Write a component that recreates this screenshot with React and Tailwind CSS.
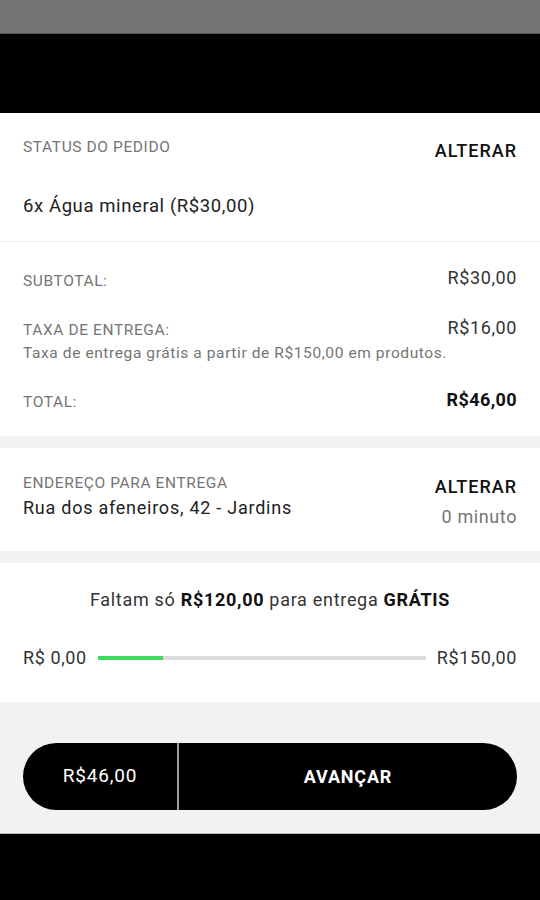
export default function App() {
  const font = { fontFamily: "Roboto, 'Noto Sans', sans-serif" }

  return (
    <div className="w-[540px] h-[900px] bg-[#f2f2f2] flex flex-col overflow-hidden" style={font}>
      {/* status + header */}
      <div className="h-[34px] bg-[#757575] border-b border-[#555]" />
      <div className="h-[79px] bg-black" />

      {/* order */}
      <div className="bg-white px-[23px] pt-[24px] pb-[22px] border-b border-[#ececec]">
        <div className="flex justify-between items-start">
          <span className="text-[15.5px] leading-[20px] tracking-[0.6px] text-[#757575]">STATUS DO PEDIDO</span>
          <span className="mt-[2px] text-[18px] leading-[24px] tracking-[1px] font-medium text-[#111]">ALTERAR</span>
        </div>
        <div className="mt-[30px] text-[18.5px] leading-[26px] tracking-[0.6px] text-[#222]">6x Água mineral (R$30,00)</div>
      </div>

      {/* totals */}
      <div className="bg-white px-[23px] pt-[24px] pb-[24px] flex flex-col gap-[25px]">
        <div className="flex justify-between items-start">
          <span className="mt-[5px] text-[15.5px] leading-[20px] tracking-[0.6px] text-[#757575]">SUBTOTAL:</span>
          <span className="text-[18px] leading-[24px] tracking-[0.6px] text-[#333]">R$30,00</span>
        </div>
        <div>
          <div className="flex justify-between items-start">
            <span className="mt-[4px] text-[15.5px] leading-[20px] tracking-[0.6px] text-[#757575]">TAXA DE ENTREGA:</span>
            <span className="text-[18px] leading-[24px] tracking-[0.6px] text-[#333]">R$16,00</span>
          </div>
          <div className="mt-[3px] text-[15.5px] leading-[20px] tracking-[0.6px] text-[#757575]">
            Taxa de entrega grátis a partir de R$150,00 em produtos.
          </div>
        </div>
        <div className="flex justify-between items-start">
          <span className="mt-[4px] text-[15.5px] leading-[20px] tracking-[0.6px] text-[#757575]">TOTAL:</span>
          <span className="text-[18px] leading-[24px] tracking-[0.4px] font-bold text-[#111]">R$46,00</span>
        </div>
      </div>

      {/* address */}
      <div className="mt-[12px] bg-white px-[23px] pt-[25px] pb-[22px] flex justify-between">
        <div>
          <div className="text-[15.5px] leading-[20px] tracking-[0.6px] text-[#757575]">ENDEREÇO PARA ENTREGA</div>
          <div className="mt-[3px] text-[18px] leading-[24px] tracking-[0.75px] text-[#222]">Rua dos afeneiros, 42 - Jardins</div>
        </div>
        <div className="flex flex-col items-end">
          <span className="mt-[2px] text-[18px] leading-[24px] tracking-[1px] font-medium text-[#111]">ALTERAR</span>
          <span className="mt-[6px] text-[18px] leading-[24px] tracking-[0.6px] text-[#757575]">0 minuto</span>
        </div>
      </div>

      {/* free delivery progress */}
      <div className="mt-[12px] bg-white px-[23px] pt-[25px] pb-[32px]">
        <div className="text-center text-[18px] leading-[24px] tracking-[0.7px] text-[#333]">
          Faltam só <span className="font-bold text-[#111]">R$120,00</span> para entrega{" "}
          <span className="font-bold text-[#111]">GRÁTIS</span>
        </div>
        <div className="mt-[34px] flex items-center gap-[11px]">
          <span className="text-[18px] leading-[24px] tracking-[0.6px] text-[#333]">R$ 0,00</span>
          <div className="flex-1 h-[4px] bg-[#dcdcdc]">
            <div className="h-full bg-[#3ddc5a]" style={{ width: "20%" }} />
          </div>
          <span className="text-[18px] leading-[24px] tracking-[0.6px] text-[#333]">R$150,00</span>
        </div>
      </div>

      {/* actions */}
      <div className="px-[23px] pt-[41px] pb-[23px]">
        <div className="h-[67px] flex rounded-full bg-black overflow-hidden">
          <div className="w-[154px] flex items-center justify-center text-white text-[19px] tracking-[0.8px]">R$46,00</div>
          <div className="w-[2px] bg-[#9a9a9a]" />
          <div className="flex-1 flex items-center justify-center text-white text-[18px] tracking-[0.8px] font-bold">AVANÇAR</div>
        </div>
      </div>

      <div className="flex-1 bg-black border-t border-[#bbb]" />
    </div>
  )
}
